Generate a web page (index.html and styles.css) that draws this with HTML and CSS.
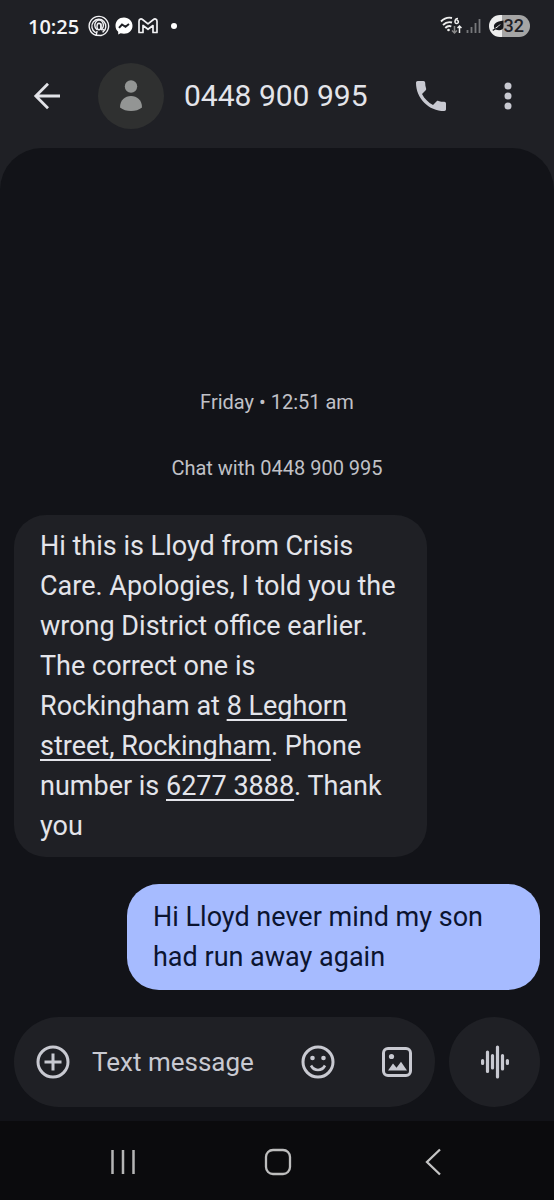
FILE: index.html
```html
<!DOCTYPE html>
<html lang="en">
<head>
<meta charset="utf-8">
<meta name="viewport" content="width=device-width, initial-scale=1">
<title>0448 900 995</title>
<link rel="stylesheet" href="styles.css">
</head>
<body>
<div class="status">
  <span class="clock">10:25</span>
  <svg class="status-icon" width="22" height="22" viewBox="0 0 22 22" fill="none" stroke="#f1f1f4" stroke-width="1.400" stroke-linecap="round" aria-hidden="true"><path d="M8 20.300A9.700 9.700 0 1 1 13 20.500L8 20.300"/><path d="M7.300 17.300A7 7 0 1 1 15 16.900"/><path d="M8.600 14.200a4.300 5 0 1 1 5.600-.6"/><ellipse cx="11" cy="11.500" rx="2" ry="3.300"/><path d="M13 9v4.500q.5 2 2.300 1"/><path d="M9 16.500l-.8 3.500"/></svg>
  <svg class="status-icon" width="18" height="18" viewBox="0 0 18 18" aria-hidden="true"><path fill="#fff" d="M9 .5C4 .5.5 4 .5 8.700c0 2.500 1 4.600 2.700 6.100v2.700l2.400-1.300c1 .3 2.200.5 3.400.5 5 0 8.500-3.500 8.500-8S14 .5 9 .5z"/><path d="M4 10.800l3-3.300 3.500 2.300L14 7" fill="none" stroke="#1f2025" stroke-width="2"/></svg>
  <svg class="status-icon" width="20" height="16" viewBox="0 0 20 16" fill="none" stroke="#f1f1f4" stroke-width="1.700" stroke-linejoin="round" aria-hidden="true"><path d="M1 3.200C1 .8 3.300.5 4.500 1.500L10 5.800l5.500-4.300C16.700.5 19 .8 19 3.200V14.500h-4V7.500L10 11.300 5 7.500v7H1z"/></svg>
  <span class="dot"></span>
  <span class="spacer"></span>
  <svg class="wifi" width="22" height="20" viewBox="0 0 22 20" fill="none" stroke="#eee" stroke-width="1.900" aria-hidden="true"><path d="M1 5.500Q6 .5 12 2M3 9q4-4 9-2.500M5.300 12q3-3 6-1.500"/><path d="M18 2.500c-2 0-3 1-3 3.200a1.700 1.700 0 1 0 1.500-1.500" stroke-width="1.500"/><circle cx="8.500" cy="14" r="1.300" fill="#eee" stroke="none"/><path d="M14.500 10v7M12 14.500l2.500 2.500 2.500-2.500" stroke="#888" stroke-width="1.500"/><path d="M19.500 17v-7M17.500 12l2-2 2 2" stroke-width="1.500"/></svg>
  <svg class="signal" width="15" height="16" viewBox="0 0 15 16" stroke="#77787b" stroke-width="1.800" aria-hidden="true"><path d="M1.500 12v3M5.500 9v6M9.500 5v10"/><path d="M13.500 1v14"/></svg>
  <span class="battery"><svg width="12" height="12" viewBox="0 0 12 12" aria-hidden="true"><path fill="#17181c" d="M11.500.5v6C11.500 10 8 11 3.500 9.600L1 11 .5 9.700l2-1C.5 4 4 1.500 11.500.5z"/><path d="M3.500 8Q6 7 8 4.500" stroke="#eee" fill="none"/></svg>32</span>
</div>
<header class="header">
  <button class="icon-btn back" aria-label="Back"><svg width="28" height="28" viewBox="0 0 28 28" fill="none" stroke="#e2e3e8" stroke-width="2.800"><path d="M27 14H3M15 1.800L2.800 14 15 26.200"/></svg></button>
  <span class="avatar"><svg width="24" height="32" viewBox="0 0 24 32" fill="#939594" aria-hidden="true"><circle cx="12" cy="6.500" r="6.200"/><path d="M1 27.500C1 20 6 16 12 16s11 4 11 11.500Q18.500 31 12 31T1 27.500z"/></svg></span>
  <h1 class="title">0448 900 995</h1>
  <button class="icon-btn call" aria-label="Call"><svg width="30" height="30" viewBox="3 3 18 18" fill="#c8c9d1"><path d="M20 15.500c-1.250 0-2.450-.2-3.570-.57-.35-.11-.74-.03-1.020.24l-2.200 2.200c-2.830-1.440-5.150-3.750-6.590-6.590l2.200-2.210c.28-.26.36-.65.250-1C8.700 6.450 8.500 5.250 8.500 4c0-.55-.45-1-1-1H4c-.55 0-1 .45-1 1 0 9.390 7.610 17 17 17 .55 0 1-.45 1-1v-3.500c0-.55-.45-1-1-1z"/></svg></button>
  <button class="icon-btn more" aria-label="More options"><svg width="8" height="28" viewBox="0 0 8 28" fill="#c8c9d1"><circle cx="4" cy="4" r="3.500"/><circle cx="4" cy="14" r="3.500"/><circle cx="4" cy="24" r="3.500"/></svg></button>
</header>
<main class="chat">
  <div class="messages">
    <p class="note">Friday • 12:51 am</p>
    <p class="note">Chat with 0448 900 995</p>
    <p class="bubble received">Hi this is Lloyd from Crisis Care. Apologies, I told you the wrong District office earlier. The correct one is Rockingham at <a href="#address">8 Leghorn street, Rockingham</a>. Phone number is <a href="tel:62773888">6277 3888</a>. Thank you</p>
    <p class="bubble sent">Hi Lloyd never mind my son had run away again</p>
  </div>
  <form class="composer">
    <div class="field">
      <button type="button" class="icon-btn" aria-label="Add"><svg width="34" height="34" viewBox="0 0 34 34" fill="none" stroke="#c8c9d1" stroke-width="3"><circle cx="17" cy="17" r="15"/><path d="M17 8.500v17M8.500 17h17"/></svg></button>
      <input class="input" type="text" placeholder="Text message" aria-label="Text message">
      <button type="button" class="icon-btn" aria-label="Emoji"><svg width="34" height="34" viewBox="0 0 34 34" fill="none" stroke="#c8c9d1" stroke-width="3"><circle cx="17" cy="17" r="15"/><path d="M10 20.500Q12.500 25 17 25t7-4.500" stroke-width="2.600"/><g fill="#c8c9d1" stroke="none"><circle cx="11.500" cy="13" r="2.300"/><circle cx="22.500" cy="13" r="2.300"/></g></svg></button>
      <button type="button" class="icon-btn gallery" aria-label="Gallery"><svg width="30" height="30" viewBox="0 0 30 30" fill="#c8c9d1"><rect x="1.500" y="1.500" width="27" height="27" rx="4.500" fill="none" stroke="#c8c9d1" stroke-width="3"/><circle cx="9.500" cy="9.500" r="2.600"/><path d="M6 23.500l5-7 3.500 4.200 4.500-6 6 8.800z"/></svg></button>
    </div>
    <button type="button" class="voice" aria-label="Voice message"><svg width="28" height="34" viewBox="0 0 28 34" stroke="#c8c9d1" stroke-width="3.200" stroke-linecap="round"><path d="M1.600 15.500v3M6.500 7v19.500M11.500 10.500v12.500M16.500 2v30M21.500 10.500v13.500M26.400 15.500v3"/></svg></button>
  </form>
</main>
<nav class="nav">
  <button class="icon-btn" aria-label="Recent apps"><svg width="26" height="26" viewBox="0 0 26 26" stroke="#b5b5b5" stroke-width="2.500"><path d="M2.500 1v24M13 1v24M23.500 1v24"/></svg></button>
  <button class="icon-btn" aria-label="Home"><svg width="28" height="28" viewBox="0 0 28 28" fill="none" stroke="#bdbdbd" stroke-width="2.300"><rect x="2" y="2" width="24" height="24" rx="7"/></svg></button>
  <button class="icon-btn" aria-label="Back"><svg width="26" height="28" viewBox="0 0 26 28" fill="none" stroke="#c4c4c4" stroke-width="2.300"><path d="M20 1.500L7 14l13 12.500"/></svg></button>
</nav>
</body>
</html>
```
FILE: styles.css
```css
* { box-sizing: border-box; }
body {
  margin: 0;
  min-height: 100vh;
  display: flex;
  flex-direction: column;
  background: #1f2025;
  color: #e3e4ea;
  font-family: Roboto, "Liberation Sans", sans-serif;
}
button { font: inherit; color: inherit; border: 0; padding: 0; background: none; }
svg { display: block; flex: none; }
.icon-btn { display: grid; place-items: center; flex: none; }
.status {
  height: 52px;
  padding: 0 24px 0 28px;
  display: flex;
  align-items: center;
}
.clock { font-family: "Open Sans", Roboto, sans-serif; font-weight: 600; font-size: 20px; color: #f4f4f6; margin-right: 9px; }
.status-icon { margin-right: 5px; }
.dot { width: 6px; height: 6px; border-radius: 50%; background: #fff; margin-left: 8px; }
.spacer { flex: 1; }
.wifi { margin-right: 4px; }
.signal { margin-right: 8px; }
.battery {
  display: flex;
  align-items: center;
  height: 22px;
  padding: 0 6px 0 3px;
  border-radius: 11px;
  background: linear-gradient(90deg, #ededed 32%, #a5a5a5 32%);
  color: #1f2025;
  font-size: 18px;
  font-weight: 500;
  line-height: 22px;
}
.header {
  height: 96px;
  padding: 0 42px 8px 33px;
  display: flex;
  align-items: center;
}
.avatar {
  display: grid;
  place-items: center;
  width: 66px;
  height: 66px;
  margin: 0 20px 0 37px;
  border-radius: 50%;
  background: #2f3030;
}
.title { flex: 1; margin: 0; font-size: 30px; font-weight: 400; line-height: 40px; white-space: nowrap; }
.call { margin-right: 58px; }
.chat {
  flex: 1;
  display: flex;
  flex-direction: column;
  padding: 14px;
  border-radius: 42px 42px 0 0;
  background: #121318;
}
.messages { flex: 1; display: flex; flex-direction: column; justify-content: flex-end; }
.note { margin: 0 0 36px; text-align: center; font-size: 20px; line-height: 30px; color: #c0c1c7; }
.note + .note { margin-bottom: 32px; }
.bubble {
  width: fit-content;
  max-width: calc(100% - 113px);
  margin: 0;
  padding: 11px 26px;
  border-radius: 32px;
  font-size: 27px;
  line-height: 40px;
}
.received { background: #1f2025; }
.received a { color: inherit; text-decoration: underline 2px; text-underline-offset: 4px; text-decoration-skip-ink: none; }
.sent { align-self: flex-end; margin: 27px 0; padding: 13px 26px; background: #a6bbff; color: #0b1430; }
.composer { display: flex; gap: 14px; }
.field {
  flex: 1;
  min-width: 0;
  height: 90px;
  padding: 0 23px 0 22px;
  display: flex;
  align-items: center;
  border-radius: 45px;
  background: #1f2025;
}
.input {
  flex: 1;
  min-width: 0;
  margin-left: 22px;
  padding: 0;
  border: 0;
  outline: 0;
  background: none;
  color: #c8c9d1;
  font: inherit;
  font-size: 26px;
  line-height: 40px;
}
.input::placeholder { color: #c8c9d1; opacity: 1; }
.gallery { margin-left: 47px; }
.voice {
  flex: none;
  display: grid;
  place-items: center;
  width: 91px;
  height: 90px;
  border-radius: 50%;
  background: #1f2025;
}
.nav {
  height: 79px;
  padding: 2px 44px 0 46px;
  display: grid;
  grid-template-columns: repeat(3, 1fr);
  align-items: center;
  background: #0b0b0d;
}
```
